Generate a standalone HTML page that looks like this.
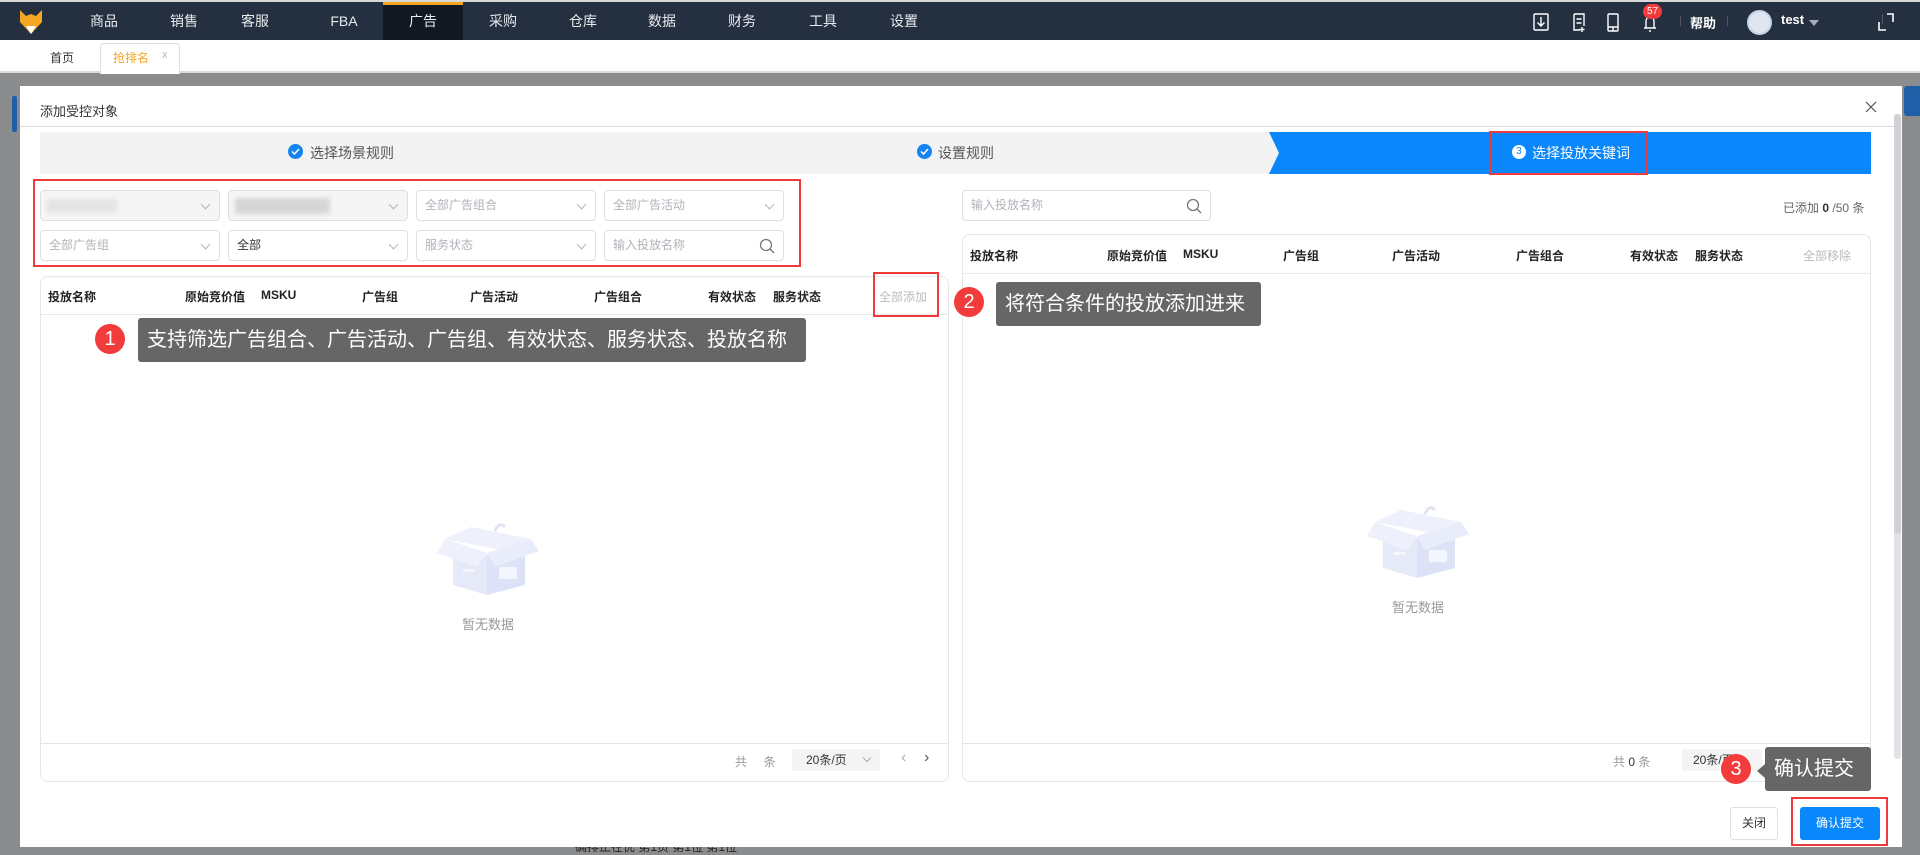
<!DOCTYPE html>
<html><head><meta charset="utf-8">
<style>
*{box-sizing:border-box;margin:0;padding:0}
body{width:1920px;height:851px;overflow:hidden;position:relative;background:#8b8c8e;font-family:"Liberation Sans","Noto Sans CJK SC",sans-serif;font-size:13px;color:#333}
.abs{position:absolute}
.nav{left:0;top:0;width:1920px;height:40px;background:#243040;border-top:2px solid #d9d9d9}
.nav .it{position:absolute;top:0;height:38px;line-height:38px;color:#e8eaee;font-size:14px;width:80px;text-align:center}
.tabs{left:0;top:40px;width:1920px;height:33px;background:#fff;border-bottom:2px solid #ddd}
.modal{left:20px;top:86px;width:1882px;height:761px;background:#fff}
.sel{position:absolute;height:31px;border:1px solid #dcdfe6;border-radius:4px;background:#fff;color:#b0b3b8;font-size:12px;line-height:29px;padding-left:8px}
.sel .ar{position:absolute;right:10px;top:10px;width:7px;height:7px;border-right:1px solid #b0b3b8;border-bottom:1px solid #b0b3b8;transform:rotate(45deg)}
.panel{position:absolute;border:1px solid #e4e6ea;border-radius:8px;background:#fff}
.th{position:absolute;font-weight:bold;font-size:12px;color:#222}
.tip{position:absolute;background:#666;color:#fff;font-size:20px;border-radius:3px;padding-left:9px}
.num{position:absolute;width:30px;height:30px;border-radius:50%;background:#f23c3c;color:#fff;font-size:20px;text-align:center;line-height:30px}
.redbox{position:absolute;border:2px solid #f0393b}
.gray{color:#999}
</style></head><body>
<div class="abs nav">
  <svg class="abs" style="left:18px;top:6px" width="26" height="28" viewBox="0 0 26 28"><path d="M2 2 L8 8 L13 6 L18 8 L24 2 L24 14 L13 26 L2 14Z" fill="#f5a623"/><path d="M8 18 L13 26 L18 18Z" fill="#fff"/></svg>
  <div class="it" style="left:64px">商品</div>
  <div class="it" style="left:144px">销售</div>
  <div class="it" style="left:215px">客服</div>
  <div class="it" style="left:304px">FBA</div>
  <div class="it" style="left:383px;background:#111822;border-top:3px solid #f5a623;line-height:33px">广告</div>
  <div class="it" style="left:463px">采购</div>
  <div class="it" style="left:543px">仓库</div>
  <div class="it" style="left:622px">数据</div>
  <div class="it" style="left:702px">财务</div>
  <div class="it" style="left:783px">工具</div>
  <div class="it" style="left:864px">设置</div>
  <svg class="abs" style="left:1532px;top:10px" width="180" height="22" viewBox="0 0 180 22" fill="none" stroke="#fff" stroke-width="1.4">
    <rect x="2" y="2" width="14" height="16" rx="1"/><path d="M9 5v9M5.5 10.5 9 14l3.5-3.5"/>
    <path d="M42 2h10v12M42 2v16h6M44.5 7h5M44.5 11h5M50 15v5M47.5 17.5h5"/>
    <rect x="76" y="2" width="10" height="17" rx="1"/><path d="M76 15h10M81 15v4"/>
    <path d="M112 16h12M114 16v-7a4 4 0 0 1 8 0v7M117 19h2"/>
  </svg>
  <div class="abs" style="left:1643px;top:2px;width:19px;height:15px;border-radius:8px;background:#f23c3c;color:#fff;font-size:10px;text-align:center;line-height:15px">57</div>
  <div class="abs" style="left:1680px;top:14px;width:1px;height:10px;background:#556"></div>
  <div class="abs" style="left:1690px;top:11px;color:#fff;font-size:13px;font-weight:bold">帮助</div>
  <div class="abs" style="left:1727px;top:14px;width:1px;height:10px;background:#556"></div>
  <div class="abs" style="left:1747px;top:8px;width:25px;height:25px;border-radius:50%;background:#dfe6f2;border:2px solid #c7d2e4"></div>
  <div class="abs" style="left:1781px;top:10px;color:#fff;font-size:13px;font-weight:bold">test</div>
  <div class="abs" style="left:1809px;top:18px;border-left:5px solid transparent;border-right:5px solid transparent;border-top:6px solid #aab"></div>
  <div class="abs" style="left:1882px;top:12px;width:1px;height:10px;background:#556"></div>
  <svg class="abs" style="left:1878px;top:10px" width="16" height="20" viewBox="0 0 16 20" fill="none" stroke="#fff" stroke-width="1.6"><path d="M1 10v8h7M9 2h6v8"/></svg>
</div>
<div class="abs tabs">
  <div class="abs" style="left:50px;top:9px;font-size:12px;color:#333">首页</div>
  <div class="abs" style="left:100px;top:3px;width:80px;height:31px;border:1px solid #ddd;border-bottom:none;border-radius:4px 4px 0 0;background:#fff"></div>
  <div class="abs" style="left:113px;top:9px;font-size:12px;color:#f5a623">抢排名</div>
  <div class="abs" style="left:162px;top:9px;font-size:11px;color:#bbb">x</div>
</div>
<div class="abs" style="left:12px;top:96px;width:5px;height:36px;background:#1f5fa8;border-radius:2px"></div>
<div class="abs" style="left:1904px;top:86px;width:16px;height:30px;background:#1f5fa8;border-radius:3px 0 0 3px"></div>
<div class="abs" style="left:575px;top:838px;font-size:12px;color:#222">确排正在优 第1页 第1位 第1位</div>

<div class="abs modal">
  <div class="abs" style="left:20px;top:15px;font-size:13px;color:#333">添加受控对象</div>
  <svg class="abs" style="left:1845px;top:15px" width="12" height="12" stroke="#555" stroke-width="1.2"><path d="M1 1l10 10M11 1 1 11"/></svg>
  <div class="abs" style="left:0;top:40px;width:1882px;height:1px;background:#ddd"></div>
  <!-- steps -->
  <div class="abs" style="left:20px;top:46px;width:1831px;height:42px;background:#f3f3f3"></div>
  <svg class="abs" style="left:1249px;top:46px" width="602" height="42"><path d="M0 0H602V42H0L10 21Z" fill="#0a87fb"/></svg>
  <div class="abs" style="left:268px;top:58px;width:15px;height:15px;border-radius:50%;background:#1484f0"></div>
  <svg class="abs" style="left:268px;top:58px" width="15" height="15" fill="none" stroke="#fff" stroke-width="1.5"><path d="M4 7.5l2.5 2.5 4.5-5"/></svg>
  <div class="abs" style="left:290px;top:57px;font-size:14px;color:#555">选择场景规则</div>
  <div class="abs" style="left:897px;top:58px;width:15px;height:15px;border-radius:50%;background:#1484f0"></div>
  <svg class="abs" style="left:897px;top:58px" width="15" height="15" fill="none" stroke="#fff" stroke-width="1.5"><path d="M4 7.5l2.5 2.5 4.5-5"/></svg>
  <div class="abs" style="left:918px;top:57px;font-size:14px;color:#555">设置规则</div>
  <div class="abs" style="left:1492px;top:59px;width:14px;height:14px;border-radius:50%;background:#fff;color:#0a87fb;font-size:10px;text-align:center;line-height:14px">3</div>
  <div class="abs" style="left:1512px;top:57px;font-size:14px;color:#fff">选择投放关键词</div>
  <div class="redbox" style="left:1469px;top:45px;width:159px;height:44px"></div>

  <!-- filters -->
  <div class="sel" style="left:20px;top:104px;width:180px;background:#f5f5f5"><div class="abs" style="left:6px;top:8px;width:70px;height:14px;background:#e4e4e4;filter:blur(2px)"></div><span class="ar"></span></div>
  <div class="sel" style="left:208px;top:104px;width:180px;background:#f5f5f5"><div class="abs" style="left:6px;top:7px;width:95px;height:16px;background:#d6d6d6;filter:blur(2px)"></div><span class="ar"></span></div>
  <div class="sel" style="left:396px;top:104px;width:180px">全部广告组合<span class="ar"></span></div>
  <div class="sel" style="left:584px;top:104px;width:180px">全部广告活动<span class="ar"></span></div>
  <div class="sel" style="left:20px;top:144px;width:180px">全部广告组<span class="ar"></span></div>
  <div class="sel" style="left:208px;top:144px;width:180px;color:#333">全部<span class="ar"></span></div>
  <div class="sel" style="left:396px;top:144px;width:180px">服务状态<span class="ar"></span></div>
  <div class="sel" style="left:584px;top:144px;width:180px">输入投放名称<svg class="abs" style="right:8px;top:7px" width="16" height="16" fill="none" stroke="#777" stroke-width="1.3"><circle cx="7" cy="7" r="5.5"/><path d="M11 11l4 4"/></svg></div>
  <div class="redbox" style="left:13px;top:93px;width:768px;height:88px"></div>

  <!-- left panel -->
  <div class="panel" style="left:20px;top:190px;width:909px;height:506px">
    <div class="abs" style="left:0;top:37px;width:907px;height:1px;background:#e8e8e8"></div>
    <div class="abs" style="left:0;top:466px;width:907px;height:1px;background:#e4e4e4"></div>
    <div class="th" style="left:7px;top:11px">投放名称</div>
    <div class="th" style="left:144px;top:11px">原始竞价值</div>
    <div class="th" style="left:220px;top:11px">MSKU</div>
    <div class="th" style="left:321px;top:11px">广告组</div>
    <div class="th" style="left:429px;top:11px">广告活动</div>
    <div class="th" style="left:553px;top:11px">广告组合</div>
    <div class="th" style="left:667px;top:11px">有效状态</div>
    <div class="th" style="left:732px;top:11px">服务状态</div>
    <div class="abs" style="left:838px;top:11px;font-size:12px;color:#bbb">全部添加</div>
    <svg class="abs" style="left:396px;top:242px" width="102" height="76" viewBox="0 0 102 76"><path d="M8 20 L34 8 L94 20 L70 32Z" fill="#eef0fb"/><path d="M16 24 L50 36 L50 76 L16 66Z" fill="#e6e9f8"/><path d="M50 36 L88 24 L88 66 L50 76Z" fill="#dde2f6"/><path d="M8 20 L50 34 L40 48 L0 34Z" fill="#eef1fc"/><path d="M94 20 L50 34 L58 48 L102 32Z" fill="#e8ecfb"/><rect x="62" y="48" width="18" height="12" fill="#f4f6fd"/><rect x="26" y="50" width="12" height="3" fill="#f4f6fd"/><path d="M58 12 q4-10 10-4" stroke="#dfe3f3" stroke-width="3" fill="none"/></svg>
    <div class="abs gray" style="left:421px;top:337px;font-size:13px">暂无数据</div>
    <div class="abs gray" style="left:694px;top:476px;font-size:12px">共&nbsp;&nbsp;&nbsp;&nbsp;&nbsp;条</div>
    <div class="abs" style="left:751px;top:472px;width:88px;height:22px;background:#f4f4f4;border-radius:3px;font-size:12px;padding-left:14px;line-height:22px">20条/页<span class="abs" style="right:10px;top:6px;width:6px;height:6px;border-right:1px solid #aaa;border-bottom:1px solid #aaa;transform:rotate(45deg)"></span></div>
    <div class="abs" style="left:860px;top:472px;font-size:16px;color:#aaa">‹</div>
    <div class="abs" style="left:883px;top:472px;font-size:16px;color:#555">›</div>
  </div>
  <div class="redbox" style="left:853px;top:186px;width:66px;height:45px"></div>

  <!-- right -->
  <div class="sel" style="left:942px;top:104px;width:249px">输入投放名称<svg class="abs" style="right:8px;top:7px" width="16" height="16" fill="none" stroke="#777" stroke-width="1.3"><circle cx="7" cy="7" r="5.5"/><path d="M11 11l4 4"/></svg></div>
  <div class="abs" style="left:1763px;top:113px;font-size:12px;color:#666">已添加 <b style="color:#333">0</b> /50 条</div>
  <div class="panel" style="left:942px;top:148px;width:909px;height:548px">
    <div class="abs" style="left:0;top:38px;width:907px;height:1px;background:#e8e8e8"></div>
    <div class="abs" style="left:0;top:508px;width:907px;height:1px;background:#e4e4e4"></div>
    <div class="th" style="left:7px;top:12px">投放名称</div>
    <div class="th" style="left:144px;top:12px">原始竞价值</div>
    <div class="th" style="left:220px;top:12px">MSKU</div>
    <div class="th" style="left:320px;top:12px">广告组</div>
    <div class="th" style="left:429px;top:12px">广告活动</div>
    <div class="th" style="left:553px;top:12px">广告组合</div>
    <div class="th" style="left:667px;top:12px">有效状态</div>
    <div class="th" style="left:732px;top:12px">服务状态</div>
    <div class="abs" style="left:840px;top:12px;font-size:12px;color:#bbb">全部移除</div>
    <svg class="abs" style="left:404px;top:267px" width="102" height="76" viewBox="0 0 102 76"><path d="M8 20 L34 8 L94 20 L70 32Z" fill="#eef0fb"/><path d="M16 24 L50 36 L50 76 L16 66Z" fill="#e6e9f8"/><path d="M50 36 L88 24 L88 66 L50 76Z" fill="#dde2f6"/><path d="M8 20 L50 34 L40 48 L0 34Z" fill="#eef1fc"/><path d="M94 20 L50 34 L58 48 L102 32Z" fill="#e8ecfb"/><rect x="62" y="48" width="18" height="12" fill="#f4f6fd"/><rect x="26" y="50" width="12" height="3" fill="#f4f6fd"/><path d="M58 12 q4-10 10-4" stroke="#dfe3f3" stroke-width="3" fill="none"/></svg>
    <div class="abs gray" style="left:429px;top:362px;font-size:13px">暂无数据</div>
    <div class="abs gray" style="left:650px;top:518px;font-size:12px">共 <span style="color:#333">0</span> 条</div>
    <div class="abs" style="left:719px;top:514px;width:80px;height:22px;background:#f4f4f4;border-radius:3px;font-size:12px;padding-left:11px;line-height:22px">20条/页</div>
  </div>
  <!-- buttons -->
  <div class="abs" style="left:1710px;top:721px;width:48px;height:33px;border:1px solid #dcdfe6;border-radius:3px;font-size:12px;text-align:center;line-height:31px">关闭</div>
  <div class="abs" style="left:1780px;top:721px;width:80px;height:33px;background:#0a87fb;border-radius:3px;color:#fff;font-size:12px;text-align:center;line-height:33px">确认提交</div>
  <div class="redbox" style="left:1771px;top:711px;width:97px;height:49px"></div>
  <!-- scrollbar -->
  <div class="abs" style="left:1874px;top:28px;width:7px;height:645px;background:#e2e3e6;border-radius:3px"></div>
  <div class="abs" style="left:1874px;top:28px;width:7px;height:420px;background:#d0d2d6;border-radius:3px"></div>
</div>

<!-- tooltips -->
<div class="num" style="left:95px;top:324px">1</div>
<div class="tip" style="left:138px;top:318px;width:668px;height:44px;line-height:44px">支持筛选广告组合、广告活动、广告组、有效状态、服务状态、投放名称</div>
<div class="num" style="left:954px;top:287px">2</div>
<div class="tip" style="left:996px;top:282px;width:265px;height:44px;line-height:44px">将符合条件的投放添加进来</div>
<div class="num" style="left:1721px;top:754px">3</div>
<div class="abs" style="left:1757px;top:764px;border-top:7px solid transparent;border-bottom:7px solid transparent;border-right:8px solid #666"></div>
<div class="tip" style="left:1765px;top:747px;width:106px;height:44px;line-height:44px">确认提交</div>
</body></html>
